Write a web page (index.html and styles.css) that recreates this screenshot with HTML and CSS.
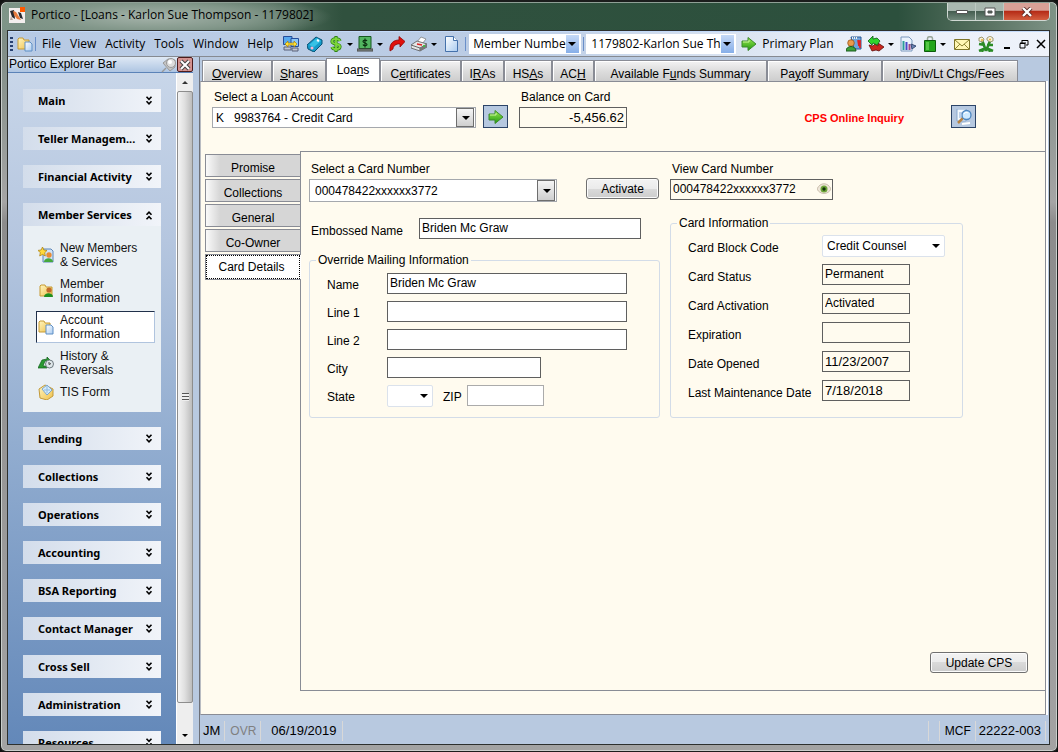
FILE: index.html
```html
<!DOCTYPE html>
<html lang="en">
<head>
<meta charset="utf-8">
<title>Portico</title>
<link rel="stylesheet" href="styles.css">
</head>
<body>
<svg class="defs" aria-hidden="true">
  <defs>
    <linearGradient id="gGreen" x1="0" y1="0" x2="0" y2="1"><stop offset="0" stop-color="#9be84f"/><stop offset="1" stop-color="#1f9a12"/></linearGradient>
    <linearGradient id="gFold" x1="0" y1="0" x2="1" y2="1"><stop offset="0" stop-color="#fff6c0"/><stop offset="1" stop-color="#efc04a"/></linearGradient>
    <linearGradient id="gPage" x1="0" y1="0" x2="1" y2="1"><stop offset="0" stop-color="#ffffff"/><stop offset="1" stop-color="#a9cbf0"/></linearGradient>
    <symbol id="arrow" viewBox="0 0 16 16"><path d="M1 5h6V1.500L15 8l-8 6.500V11H1z" fill="url(#gGreen)" stroke="#3d8a2c" stroke-width="1"/><path d="M2 6h6V4" fill="none" stroke="#c8f59b"/></symbol>
    <symbol id="chev" viewBox="0 0 8 10"><path d="M1.500 .8L4 3.300 6.500 .8M1.500 5.300L4 7.800l2.500-2.500" fill="none" stroke="#000" stroke-width="1.600"/></symbol>
    <symbol id="folder" viewBox="0 0 16 16"><path d="M1 3l1-1h4l1 2h5v9H1z" fill="url(#gFold)" stroke="#c79b35"/><path d="M8 6h5l2 2v7H8z" fill="url(#gPage)" stroke="#5f8fc4"/></symbol>
  </defs>
</svg>
<div class="window">
  <header class="titlebar">
    <svg class="logo" viewBox="0 0 16 16"><path d="M0 1h11v4h5v11H0z" fill="#f3eeee"/><path d="M1 4l4-1 1 9-3-2z" fill="#27272d"/><path d="M9 5l3 1 2 6-3-1z" fill="#27272d"/><path d="M4 4l3 1 5 8-4-1-3-4z" fill="#e77b3d"/><path d="M11 0h5v5h-5z" fill="#ff5a00"/><path d="M2 9l2 4-3 0z" fill="#b9a79f"/></svg>
    <h1 class="title">Portico - [Loans - Karlon Sue Thompson - 1179802]</h1>
    <div class="caption">
      <button class="cap" aria-label="Minimize"><svg width="12" height="6"><path d="M.5 1.500h11v3H.5z" fill="#fff" stroke="#555"/></svg></button>
      <button class="cap" aria-label="Restore"><svg width="12" height="10"><path d="M1 1h10v8H1z" fill="#fff" stroke="#555"/><path d="M4 4h4v2H4z" fill="#4c6256" stroke="#555"/></svg></button>
      <button class="cap cap-close" aria-label="Close"><svg width="12" height="10"><path d="M2 1l8 8M10 1L2 9" stroke="#5b2a25" stroke-width="4"/><path d="M2 1l8 8M10 1L2 9" stroke="#fff" stroke-width="2.400"/></svg></button>
    </div>
  </header>

  <div class="client">
    <nav class="menubar">
      <span class="grip"></span>
      <svg class="ico" viewBox="0 0 16 16"><use href="#folder"/></svg>
      <span class="sep"></span>
      <button class="menu">File</button><button class="menu">View</button><button class="menu">Activity</button><button class="menu">Tools</button><button class="menu">Window</button><button class="menu">Help</button>
      <div class="tools">
        <button class="tool" aria-label="Network"><svg class="ico" viewBox="0 0 16 16"><path d="M.5.500h8.500v8H.5z" fill="#58a9ee" stroke="#254d9b"/><path d="M8 2.500h7.500v8H8z" fill="#8ac6f6" stroke="#254d9b"/><path d="M1 11h7v3H1zM9 12h6v3H9z" fill="#c0c5d0" stroke="#58607a"/><path d="M2 8l3-3v2h6V5l3 3-3 3V9H5v2z" fill="#ffe234" stroke="#a77c08" stroke-width=".7"/></svg></button>
        <button class="tool" aria-label="Wallet"><svg class="ico" viewBox="0 0 16 16"><path d="M0 9l9-8 6 3v4l-8 8-6-3z" fill="#159ac9" stroke="#075274"/><path d="M2 9l8-7 4 3-7 6z" fill="#37c2e6"/><path d="M10 4l2 1" stroke="#fff" stroke-width="2"/><circle cx="5" cy="12" r="1.500" fill="#fbb6d0"/></svg></button>
        <button class="tool tool-drop" aria-label="Dollar"><svg class="ico ico-narrow" viewBox="0 0 12 16"><path d="M10 5C9 2 2 2 2 5.500S10 7 10 10.500 3 14 2 11M6 0v16" fill="none" stroke="#2e8211" stroke-width="3.200"/><path d="M10 5C9 2 2 2 2 5.500S10 7 10 10.500 3 14 2 11M6 1v14" fill="none" stroke="#7ed63a" stroke-width="1.800"/></svg><span class="tri"></span></button>
        <button class="tool tool-drop wide" aria-label="Cash"><svg class="ico" viewBox="0 0 16 16"><path d="M2 .500h12v12H2z" fill="#52b560" stroke="#16591f"/><path d="M0 13h16v2H0z" fill="#8c9590" stroke="#444"/><path d="M10 5C9 3.500 6 4 6 5.500s4 1.500 4 3-3.500 1.500-4 0M8 2.500v9" fill="none" stroke="#0b2f10" stroke-width="1.200"/></svg><span class="tri"></span></button>
        <button class="tool" aria-label="Forward"><svg class="ico" viewBox="0 0 16 16"><path d="M1 15C0 7 5 4 10 4V.500l6 5L11 11V8C7 7.500 4 10 4 13z" fill="#e0100c" stroke="#8f0907" stroke-width=".8"/></svg></button>
        <button class="tool tool-drop wide" aria-label="Print"><svg class="ico" viewBox="0 0 16 16"><path d="M6 6l4-5 5 2-4 5z" fill="#fff" stroke="#777" stroke-width=".7"/><path d="M0 9l6-4 10 3v3l-7 4-9-3z" fill="#e4e6e6" stroke="#555" stroke-width=".8"/><path d="M0 9l9 3 7-4M9 12v3" fill="none" stroke="#666"/><path d="M9 15l7-4V8l-7 4z" fill="#777"/><path d="M6 8l5 1" stroke="#d22" stroke-width="1.500"/><circle cx="13" cy="10" r="1" fill="#3c3"/></svg><span class="tri"></span></button>
        <button class="tool" aria-label="New page"><svg class="ico" viewBox="0 0 16 16"><path d="M2.500.5h8l4 4v11h-12z" fill="url(#gPage)" stroke="#4471ab"/><path d="M10.500.5v4h4" fill="#fff" stroke="#4471ab"/></svg></button>
        <span class="sep"></span>
        <span class="combo combo-bar"><select class="w-key" aria-label="Search by"><option>Member Numbe</option></select></span>
        <span class="sep sep-mid"></span>
        <span class="combo combo-bar"><select class="w-member" aria-label="Member"><option>1179802-Karlon Sue Th</option></select></span>
        <button class="tool go" aria-label="Go"><svg class="ico" viewBox="0 0 16 16"><use href="#arrow"/></svg></button>
        <span class="plan">Primary Plan</span>
      </div>
      <div class="tools tools-end">
        <button class="tool" aria-label="Members"><svg class="ico" viewBox="0 0 16 16"><path d="M5 1h10v12H8z" fill="#6fa5dc" stroke="#2a5a96"/><path d="M6 2h6" stroke="#eee" stroke-width="2" stroke-dasharray="1 1"/><path d="M12 4l1 6M14 4v8" stroke="#d22" stroke-width="1.700"/><circle cx="5" cy="7" r="3.300" fill="#e99a4c" stroke="#8c4a12" stroke-width=".7"/><path d="M0 15c0-6 10-6 10 0z" fill="#3da13a" stroke="#1b5c1c"/></svg></button>
        <button class="tool tool-drop wide" aria-label="Transfer"><svg class="ico" viewBox="0 0 16 16"><path d="M1 9l4 1 2-2 3 2V7l6 4-5 4-3-1-4 1z" fill="#c9261f" stroke="#610c09" stroke-width=".8"/><path d="M0 5l5-5v3l4-1 3 3-3 4-4-2-1 2z" fill="#2fd32d" stroke="#0d5c12" stroke-width=".8"/></svg><span class="tri"></span></button>
        <button class="tool" aria-label="Report"><svg class="ico" viewBox="0 0 16 16"><path d="M1 1h8l3 3v11H1z" fill="#eaf3fd" stroke="#7b98bd"/><path d="M3.500 14V5" stroke="#2c9b9b" stroke-width="2"/><path d="M6.500 14V6" stroke="#4848c8" stroke-width="2"/><path d="M9.500 14V8" stroke="#a84a8a" stroke-width="2"/><path d="M11 8l5 2-4 3z" fill="#6c84b5" stroke="#394d75"/></svg></button>
        <button class="tool tool-drop wide" aria-label="Bag"><svg class="ico ico-narrow" viewBox="0 0 12 16"><path d="M3.500 5V2.500C3.500 0 8.500 0 8.500 2.500V5" fill="none" stroke="#9aa79a" stroke-width="1.500"/><path d="M.5 4.500h11v11H.5z" fill="#23a51b" stroke="#0b5c0a"/><path d="M2 6h3v8H2z" fill="#55c746"/></svg><span class="tri"></span></button>
        <button class="tool" aria-label="Mail"><svg class="ico" viewBox="0 0 16 16"><path d="M.5 3.500h15v10H.5z" fill="#fff7b4" stroke="#7d7528"/><path d="M1 4l7 6 7-6M1 13l5-5M15 13l-5-5" fill="none" stroke="#8e8532"/></svg></button>
        <button class="tool" aria-label="Flower"><svg class="ico" viewBox="0 0 16 16"><path d="M8 15L4 4M8 15l4-10M8 12l-7 3M8 12l7 3M7 9L1 8M9 9l6 0M5 13l-1 3M11 13l1 3" stroke="#2a8b25" stroke-width="2.600"/><path d="M1 2l3-1 2 2-1 3-4-1zM9 2l3-2 3 2v3l-3 1-3-2z" fill="#f5f0dc" stroke="#8d8654" stroke-width=".8"/><circle cx="4" cy="4" r="1" fill="#e6b22c"/><circle cx="12" cy="3.500" r="1" fill="#e6b22c"/></svg></button>
        <button class="mdi" aria-label="Minimize form"><svg width="10" height="10"><path d="M2 9h6" stroke="#000" stroke-width="2"/></svg></button>
        <button class="mdi" aria-label="Restore form"><svg width="10" height="10"><path d="M3 1.500h6V6H7M1 4.500h5V9H1zM3 1v3M1 4h6" fill="none" stroke="#000"/></svg></button>
        <button class="mdi" aria-label="Close form"><svg width="10" height="10"><path d="M1 1l8 8M9 1L1 9" stroke="#000" stroke-width="1.500"/></svg></button>
      </div>
    </nav>

    <div class="body">
      <aside class="sidebar">
        <div class="side-head"><h2 class="side-title">Portico Explorer Bar</h2>
          <button class="side-btn" aria-label="Pin"><svg class="ico" viewBox="0 0 16 16"><path d="M1 15l4-4" stroke="#999" stroke-width="1.500"/><path d="M2 6l5-4 7 1v7l-5 4z" fill="#c4c4c4" stroke="#999"/><circle cx="10" cy="6" r="4.500" fill="#dcdcdc" stroke="#999"/><circle cx="9" cy="5" r="2" fill="#fff"/></svg></button>
          <button class="side-btn side-close" aria-label="Close bar"><svg width="12" height="12"><path d="M2 2l8 8M10 2l-8 8" stroke="#444" stroke-width="4"/><path d="M2 2l8 8M10 2l-8 8" stroke="#fff" stroke-width="2"/></svg></button>
        </div>
        <div class="side-main">
          <div class="groups">
            <button class="group">Main<svg class="chev"><use href="#chev"/></svg></button>
            <button class="group">Teller Managem...<svg class="chev"><use href="#chev"/></svg></button>
            <button class="group">Financial Activity<svg class="chev"><use href="#chev"/></svg></button>
            <section class="open">
              <button class="group">Member Services<svg class="chev up"><use href="#chev"/></svg></button>
              <div class="links">
                <a class="link" href="#new"><svg class="ico" viewBox="0 0 16 16"><path d="M5 2h8l2 2v11H5z" fill="#cfe3f7" stroke="#5c86b8"/><circle cx="11" cy="8" r="2.700" fill="#e88b35"/><path d="M6 15c0-5 9-5 9 0z" fill="#45a83c"/><path d="M4.500 0l1.400 3 3.100.4-2.300 2.300.6 3.300-2.800-1.600L1.700 9l.6-3.300L0 3.400 3.100 3z" fill="#ffd93b" stroke="#a67a0c" stroke-width=".7"/></svg><span>New Members<br>&amp; Services</span></a>
                <a class="link" href="#member"><svg class="ico" viewBox="0 0 16 16"><path d="M2 3l1-1h4l1 2h6v9H2z" fill="url(#gFold)" stroke="#c79b35"/><circle cx="11" cy="7" r="2.600" fill="#c06a2a"/><path d="M6 14c0-5 9-5 9 0z" fill="#1f8f1f"/></svg><span>Member<br>Information</span></a>
                <a class="link current" href="#account"><svg class="ico" viewBox="0 0 16 16"><use href="#folder"/></svg><span>Account<br>Information</span></a>
                <a class="link" href="#history"><svg class="ico" viewBox="0 0 16 16"><path d="M0 13l4-8 5-1V2l3 3-3 3V6L7 6 5 11h4v2z" fill="#2a9a32" stroke="#0e5c17" stroke-width=".7"/><circle cx="11.500" cy="9" r="4" fill="#dfe7ea" stroke="#707b80"/><path d="M11 7v2.500l2-1" fill="none" stroke="#444"/></svg><span>History &amp;<br>Reversals</span></a>
                <a class="link" href="#tis"><svg class="ico" viewBox="0 0 16 16"><path d="M1 5l6-4 8 4v7l-6 4-7-2z" fill="url(#gFold)" stroke="#c29a3a"/><path d="M4 5l5-4 5 5-5 5z" fill="#d4ebfb" stroke="#7ca7ce"/><path d="M9 2v7M6 6l6 0" stroke="#8fbbe0"/></svg><span>TIS Form</span></a>
              </div>
            </section>
            <button class="group">Lending<svg class="chev"><use href="#chev"/></svg></button>
            <button class="group">Collections<svg class="chev"><use href="#chev"/></svg></button>
            <button class="group">Operations<svg class="chev"><use href="#chev"/></svg></button>
            <button class="group">Accounting<svg class="chev"><use href="#chev"/></svg></button>
            <button class="group">BSA Reporting<svg class="chev"><use href="#chev"/></svg></button>
            <button class="group">Contact Manager<svg class="chev"><use href="#chev"/></svg></button>
            <button class="group">Cross Sell<svg class="chev"><use href="#chev"/></svg></button>
            <button class="group">Administration<svg class="chev"><use href="#chev"/></svg></button>
            <button class="group">Resources<svg class="chev"><use href="#chev"/></svg></button>
          </div>
          <div class="scroll">
            <span class="scroll-end"><span class="tri tri-up"></span></span>
            <span class="thumb"><span class="thumb-grip"></span></span>
            <span class="scroll-end scroll-down"><span class="tri"></span></span>
          </div>
        </div>
      </aside>

      <main class="main">
        <div class="tabs">
          <button class="tab w70"><u>O</u>verview</button><button class="tab w54"><u>S</u>hares</button><button class="tab w54 active">Loa<u>n</u>s</button><button class="tab w81">C<u>e</u>rtificates</button><button class="tab w43">I<u>R</u>As</button><button class="tab w48">HS<u>A</u>s</button><button class="tab w42">AC<u>H</u></button><button class="tab w173">Available F<u>u</u>nds Summary</button><button class="tab w115">Pa<u>y</u>off Summary</button><button class="tab w136">In<u>t</u>/Div/Lt Chgs/Fees</button>
        </div>
        <div class="page">
          <div class="top">
            <div class="field"><label for="loan">Select a Loan Account</label>
              <span class="combo combo-box"><select id="loan" class="w-loan"><option>K&nbsp;&nbsp; 9983764 - Credit Card</option></select></span></div>
            <button class="square" aria-label="Open loan"><svg class="ico" viewBox="0 0 16 16"><use href="#arrow"/></svg></button>
            <div class="field"><label for="bal">Balance on Card</label><input id="bal" class="text ro num w-bal" value="-5,456.62" readonly></div>
            <strong class="cps">CPS Online Inquiry</strong>
            <button class="square find" aria-label="CPS online inquiry"><svg class="ico" viewBox="0 0 16 16"><path d="M1 0h9v12H1z" fill="#f5faff" stroke="#8aa9cf"/><path d="M3 4h3M3 6h2M3 8h3" stroke="#86a7d3"/><path d="M6 15l8-1" stroke="#fff" stroke-width="2"/><path d="M7 9l-5 5" stroke="#b78342" stroke-width="2.500"/><circle cx="10.500" cy="6" r="4.500" fill="#cfeaff" stroke="#4d86bf" stroke-width="1.300"/><path d="M8 5c1-2 3-2 4-1" stroke="#fff" fill="none"/></svg></button>
          </div>
          <div class="detail">
            <div class="vtabs">
              <button class="vtab">Promise</button><button class="vtab">Collections</button><button class="vtab">General</button><button class="vtab">Co-Owner</button><button class="vtab vactive">Card Details</button>
            </div>
            <div class="card">
              <div class="cols">
                <div class="left">
                  <div class="pick">
                    <div class="field"><label for="num">Select a Card Number</label>
                      <span class="combo combo-box tall"><select id="num" class="w-num"><option>000478422xxxxxx3772</option></select></span></div>
                    <button class="btn w-act">Activate</button>
                  </div>
                  <div class="emb"><label for="emb">Embossed Name</label><input id="emb" class="text w-emb" value="Briden Mc Graw"></div>
                  <fieldset class="box mail">
                    <legend>Override Mailing Information</legend>
                    <div class="row"><label for="nm">Name</label><input id="nm" class="text w-line" value="Briden Mc Graw"></div>
                    <div class="row"><label for="l1">Line 1</label><input id="l1" class="text w-line"></div>
                    <div class="row"><label for="l2">Line 2</label><input id="l2" class="text w-line"></div>
                    <div class="row"><label for="city">City</label><input id="city" class="text w-city"></div>
                    <div class="row"><label for="st">State</label><span class="combo combo-flat"><select id="st" class="w-state"><option></option></select></span><label class="zip" for="zip">ZIP</label><input id="zip" class="text pale w-zip"></div>
                  </fieldset>
                </div>
                <div class="right">
                  <div class="field"><label for="view">View Card Number</label>
                    <span class="eyebox"><input id="view" class="text ro" value="000478422xxxxxx3772" readonly><svg class="eye" viewBox="0 0 14 12"><path d="M0 6c3-7 11-7 14 0-3 6-11 6-14 0z" fill="#eee6d8" stroke="#cbbfae"/><circle cx="7" cy="6" r="3.500" fill="#6fa53b"/><circle cx="7" cy="6" r="1.700" fill="#12330c"/></svg></span></div>
                  <fieldset class="box info">
                    <legend>Card Information</legend>
                    <div class="row"><label for="bc">Card Block Code</label><span class="combo combo-flat"><select id="bc" class="w-code"><option>Credit Counsel</option></select></span></div>
                    <div class="row"><label for="cs">Card Status</label><input id="cs" class="text ro w-info" value="Permanent" readonly></div>
                    <div class="row"><label for="ca">Card Activation</label><input id="ca" class="text ro w-info" value="Activated" readonly></div>
                    <div class="row"><label for="ex">Expiration</label><input id="ex" class="text ro w-info" readonly></div>
                    <div class="row"><label for="do">Date Opened</label><input id="do" class="text ro num w-info" value="11/23/2007" readonly></div>
                    <div class="row"><label for="lm">Last Maintenance Date</label><input id="lm" class="text ro num w-info" value="7/18/2018" readonly></div>
                  </fieldset>
                </div>
              </div>
              <button class="btn update">Update CPS</button>
            </div>
          </div>
        </div>
        <footer class="status"><span>JM</span><span class="dim">OVR</span><span class="date">06/19/2019</span><span class="blank"></span><span class="mcf">MCF</span><span>22222-003</span></footer>
      </main>
    </div>
  </div>
</div>
</body>
</html>
```
FILE: styles.css
```css
* { box-sizing: border-box; }
html, body { height: 100%; }
body { margin: 0; font: 12px/16px "Liberation Sans", Arial, sans-serif; color: #000; background: #111; }
button, input, select { font: inherit; color: inherit; margin: 0; padding: 0; border: 0; background: none; border-radius: 0; }
select { appearance: none; width: 100%; }
svg { display: block; flex: none; }
.defs { position: absolute; width: 0; height: 0; }
.ico { width: 16px; height: 16px; }
.ico-narrow { width: 12px; }
.tri { width: 0; height: 0; border: 3px solid transparent; border-top-color: #000; border-bottom: 0; }
.tri-up { border-top: 0; border-bottom: 3px solid #333; }

.window { display: flex; flex-direction: column; height: 100vh; padding: 0 7px 6px 6px; overflow: hidden; border: 1px solid #1b1d1c; border-top-width: 2px; border-radius: 7px 7px 6px 6px; background: linear-gradient(#76877e, #a5a5a5 200px, #8c8c8c 220px, #a3a3a3 100%); box-shadow: inset 0 0 0 1px #c9cecb; }
.titlebar { display: flex; align-items: flex-start; height: 28px; flex: none; margin: 0 -6px 0 -5px; padding-left: 7px; border-top: 1px solid #8fa096; border-radius: 6px 6px 0 0; background: radial-gradient(ellipse 180px 24px at 150px 14px, #a5b3aa 0, #82978a 55%, transparent), linear-gradient(90deg, #7d9487 0, #54705f 270px, #30513e 340px, #2c503d 85%, #56705f 93%, #7e9386 100%); }
.logo { width: 16px; height: 16px; margin-top: 4px; }
.title { flex: 1; margin: 3px 0 0 6px; font: 12px/18px "Open Sans", "Noto Sans", sans-serif; }
.caption { display: flex; width: 103px; height: 18px; margin-right: 6px; border: 1px solid #d0d8d3; border-top: 0; border-radius: 0 0 5px 5px; overflow: hidden; }
.cap { flex: 0 0 28px; display: grid; place-items: center; border-right: 1px solid #bdc9c2; background: linear-gradient(#a9b8b0 0 45%, #465e51 50%, #70877a); }
.cap-close { flex: 1; border-right: 0; background: linear-gradient(#d9a096 0 42%, #b62c17 50%, #d45f40); }
.client { display: flex; flex-direction: column; flex: 1; min-height: 0; border: 1px solid #2d302e; background: #b8c9e0; }

.menubar { display: flex; align-items: center; flex: none; height: 26px; padding-left: 2px; border-top: 1px solid #c3dafa; border-bottom: 1px solid #868a91; background: linear-gradient(90deg, #b7cae4, #bccde5 50%, #e9eff8 80%, #eef2fa); font: 12px/16px "Open Sans", "Noto Sans", sans-serif; }
.grip { width: 3px; height: 15px; margin-right: 4px; background: repeating-linear-gradient(#27406f 0 2px, transparent 2px 4px); }
.sep { width: 1px; height: 14px; margin: 0 3px 0 2px; background: #6a8fc9; }
.menu { padding: 0 3px; margin-right: 3px; white-space: nowrap; }
.tools { display: flex; align-items: center; }
.tools-end { margin-left: auto; }
.tool { display: flex; align-items: center; justify-content: center; width: 24px; height: 22px; gap: 5px; }
.tool-drop { width: 28px; }
.tool.wide { width: 30px; gap: 4px; }
.go { width: 26px; }
.plan { white-space: nowrap; }
.mdi { width: 17px; height: 22px; display: grid; place-items: center; }
.combo { position: relative; display: block; background: #fff; }
.combo::after { content: ""; position: absolute; right: 6px; top: 50%; margin-top: -2px; border: 4px solid transparent; border-top-color: #000; border-bottom: 0; pointer-events: none; }
.combo select { display: block; }
.combo-bar { height: 20px; }
.combo-bar::before { content: ""; position: absolute; right: 2px; top: 1px; width: 13px; height: 18px; background: linear-gradient(#c6daf7, #86aee8); pointer-events: none; }
.combo-bar::after { right: 5px; }
.combo-bar select { height: 20px; padding: 0 15px 0 4px; }
.combo-bar .w-key { width: 112px; }
.combo-bar .w-member { width: 150px; padding-left: 5px; }
.sep-mid { margin: 0 2px; }

.body { display: flex; flex: 1; min-height: 0; }
.sidebar { display: flex; flex-direction: column; flex: 0 0 185px; min-height: 0; }
.side-head { display: flex; align-items: center; height: 16px; flex: none; border-bottom: 1px solid #5b83b8; background: linear-gradient(#dfe9f5, #aec5e2); }
.side-title { flex: 1; margin: 0; padding-left: 1px; font: 12px/15px "Liberation Sans", Arial, sans-serif; }
.side-btn { width: 16px; height: 15px; display: grid; place-items: center; }
.side-close { border: 1px solid #4c1b1b; border-radius: 2px; background: #d59390; }
.side-main { display: flex; flex: 1; min-height: 0; }
.groups { flex: 1; overflow: hidden; padding: 16px 15px 0; background: linear-gradient(#c8d6e9, #b5c6df 25%, #92add0 55%, #6388b9); }
.group { display: flex; align-items: center; justify-content: space-between; width: 100%; height: 23px; margin-bottom: 15px; padding: 0 8px 0 15px; text-align: left; background: linear-gradient(90deg, #d3ddeb, #f1f4f9); font: bold 11px/18px "Noto Sans", "Open Sans", sans-serif; white-space: nowrap; }
.chev { width: 8px; height: 10px; }
.up { transform: rotate(180deg); }
.open { margin-bottom: 15px; background: #eaf0f4; }
.open .group { margin: 0; }
.links { height: 186px; padding: 13px 6px 0 13px; }
.link { display: flex; align-items: center; gap: 6px; min-height: 32px; margin-bottom: 4px; padding-left: 2px; color: #111; line-height: 14px; text-decoration: none; }
.link:last-child { min-height: 18px; }
.current { padding-left: 1px; border: 1px solid #b0c4de; border-top-color: #20304a; border-left-color: #20304a; background: #fff; }
.scroll { display: flex; flex-direction: column; flex: 0 0 17px; border-left: 1px solid #fff; background: #eee; }
.scroll-end { display: grid; place-items: center; height: 18px; flex: none; }
.scroll-down { margin-top: auto; }
.thumb { display: grid; place-items: center; flex: 1; margin-bottom: 23px; border: 1px solid #8d8d8d; border-radius: 2px; background: linear-gradient(90deg, #f4f4f4, #dedede 50%, #bcbcbc); }
.thumb-grip { width: 7px; height: 8px; background: repeating-linear-gradient(#555 0 1px, #eee 1px 3px); }

.main { display: flex; flex-direction: column; flex: 1; min-width: 0; margin-left: 6px; border-left: 1px solid #6d7078; }
.tabs { display: flex; align-items: flex-end; flex: none; height: 24px; padding-left: 2px; }
.tab { flex: none; height: 21px; padding: 5px 0 0; border: 1px solid #898c95; border-width: 1px 1px 0; background: linear-gradient(#f3f3f3, #dfdfdf 45%, #cdcdcd); box-shadow: inset 1px 1px #fff; white-space: nowrap; }
.active { height: 23px; padding: 0; background: #fff; }
.w70 { width: 70px; } .w54 { width: 54px; } .w81 { width: 81px; } .w43 { width: 43px; } .w48 { width: 48px; } .w42 { width: 42px; } .w173 { width: 173px; } .w115 { width: 115px; } .w136 { width: 136px; }
.page { display: flex; flex-direction: column; flex: 1; min-height: 0; margin-right: 3px; border: 1px solid #898c95; border-left-color: #b9bcc2; background: #fffbef; box-shadow: 2px 0 #fff; }
.top { display: flex; align-items: flex-end; flex: none; height: 46px; padding: 0 69px 0 11px; }
.field { display: flex; flex-direction: column; gap: 2px; align-items: flex-start; }
.field > label { padding-left: 2px; white-space: nowrap; }
.square { display: grid; place-items: center; width: 25px; height: 23px; margin: 0 11px 0 7px; border: 1px solid #2c4468; background: #b6c8e0; }
.find { margin: 0 0 0 47px; }
.cps { margin-left: auto; margin-bottom: 2px; color: #f00; font-size: 11px; white-space: nowrap; }
.text { height: 21px; padding: 0 2px 1px; border: 1px solid #5f5f5f; background: #fff; }
.ro { background: #fffbef; }
.num { font-size: 13px; }
.pale { border-color: #ababab; }
.w-bal { width: 108px; text-align: right; }
.combo-box { border: 1px solid #a5a8ad; height: 21px; }
.combo-box::before { content: ""; position: absolute; right: 1px; top: 0; bottom: 0; width: 16px; border: 1px solid #6e6e6e; background: linear-gradient(#f5f5f5, #cfcfcf); pointer-events: none; }
.combo-box::after { right: 5px; }
.combo-box select { height: 19px; padding: 0 20px 0 3px; }
.combo-box .w-loan { width: 262px; }
.tall { height: 23px; }
.tall .w-num { width: 246px; height: 21px; padding-left: 5px; }

.detail { display: flex; flex: 1; min-height: 0; margin: 23px 0; }
.vtabs { display: flex; flex-direction: column; gap: 2px; flex: 0 0 99px; padding: 3px 0 0 4px; z-index: 1; }
.vtab { height: 23px; padding-top: 4px; border: 1px solid #898c95; border-right: 0; background: linear-gradient(90deg, #fafafa, #d6d6d6 14px, #d6d6d6); white-space: nowrap; }
.vactive { height: 26px; margin-right: -1px; padding: 0 4px 0 0; outline: 1px dotted #000; outline-offset: -2px; background: #fff; }
.card { display: flex; flex-direction: column; flex: 1; min-width: 0; padding: 9px 17px 17px 8px; border: 1px solid #898c95; border-right: 0; }
.cols { display: flex; gap: 10px; }
.left { flex: 0 0 351px; }
.right { flex: 0 0 293px; }
.pick { display: flex; align-items: flex-end; justify-content: space-between; padding-right: 1px; }
.btn { height: 21px; border: 1px solid #707070; border-radius: 3px; background: linear-gradient(#f3f3f3, #ebebeb 50%, #dadada 50%, #cdcdcd); box-shadow: inset 0 0 0 1px #fbfbfb; }
.w-act { width: 73px; margin-bottom: 3px; }
.emb { display: flex; margin-top: 16px; padding-left: 2px; white-space: nowrap; }
.emb label { width: 108px; padding-top: 5px; }
.w-emb { width: 222px; }
.box { margin: 0; padding: 0; border: 1px solid #d3dce8; border-radius: 3px; }
.box legend { margin-left: 6px; padding: 0 2px; }
.mail { margin-top: 13px; padding: 5px 0 11px; }
.info { height: 203px; margin-top: 15px; padding-top: 4px; }
.row { display: flex; height: 21px; margin-bottom: 7px; padding-left: 17px; white-space: nowrap; }
.row:last-child { margin-bottom: 0; }
.row label { flex: 0 0 60px; padding-top: 4px; }
.info .row { margin-bottom: 8px; }
.info .row label { flex-basis: 134px; padding-top: 5px; }
.row .zip { flex: 0 0 24px; margin-left: 10px; }
.w-line { width: 240px; } .w-city { width: 154px; } .w-zip { width: 77px; } .w-info { width: 88px; }
.combo-flat { height: 22px; border: 1px solid #dbe2ec; border-radius: 2px; }
.combo-flat::after { right: 4px; }
.combo-flat select { height: 20px; padding-left: 4px; }
.combo-flat .w-state { width: 44px; }
.combo-flat .w-code { width: 121px; }
.eyebox { position: relative; display: block; width: 163px; }
.eyebox .text { display: block; width: 100%; }
.eye { position: absolute; right: 2px; top: 4px; width: 14px; height: 12px; }
.update { width: 98px; margin: auto 0 0 auto; }
.status { display: flex; align-items: center; flex: none; height: 29px; padding: 2px 3px 0 0; font-size: 13px; line-height: 20px; white-space: nowrap; }
.status span { height: 20px; padding: 0 4px 0 3px; border-right: 1px solid #d8d8d8; }
.status .dim { padding-left: 5px; color: #808080; font-size: 12px; }
.status .date { padding: 0 6px 0 10px; }
.status .blank { width: 12px; margin-left: auto; padding: 0; border-left: 1px solid #d8d8d8; }
.status .mcf { padding-left: 5px; font-size: 12px; }
```
